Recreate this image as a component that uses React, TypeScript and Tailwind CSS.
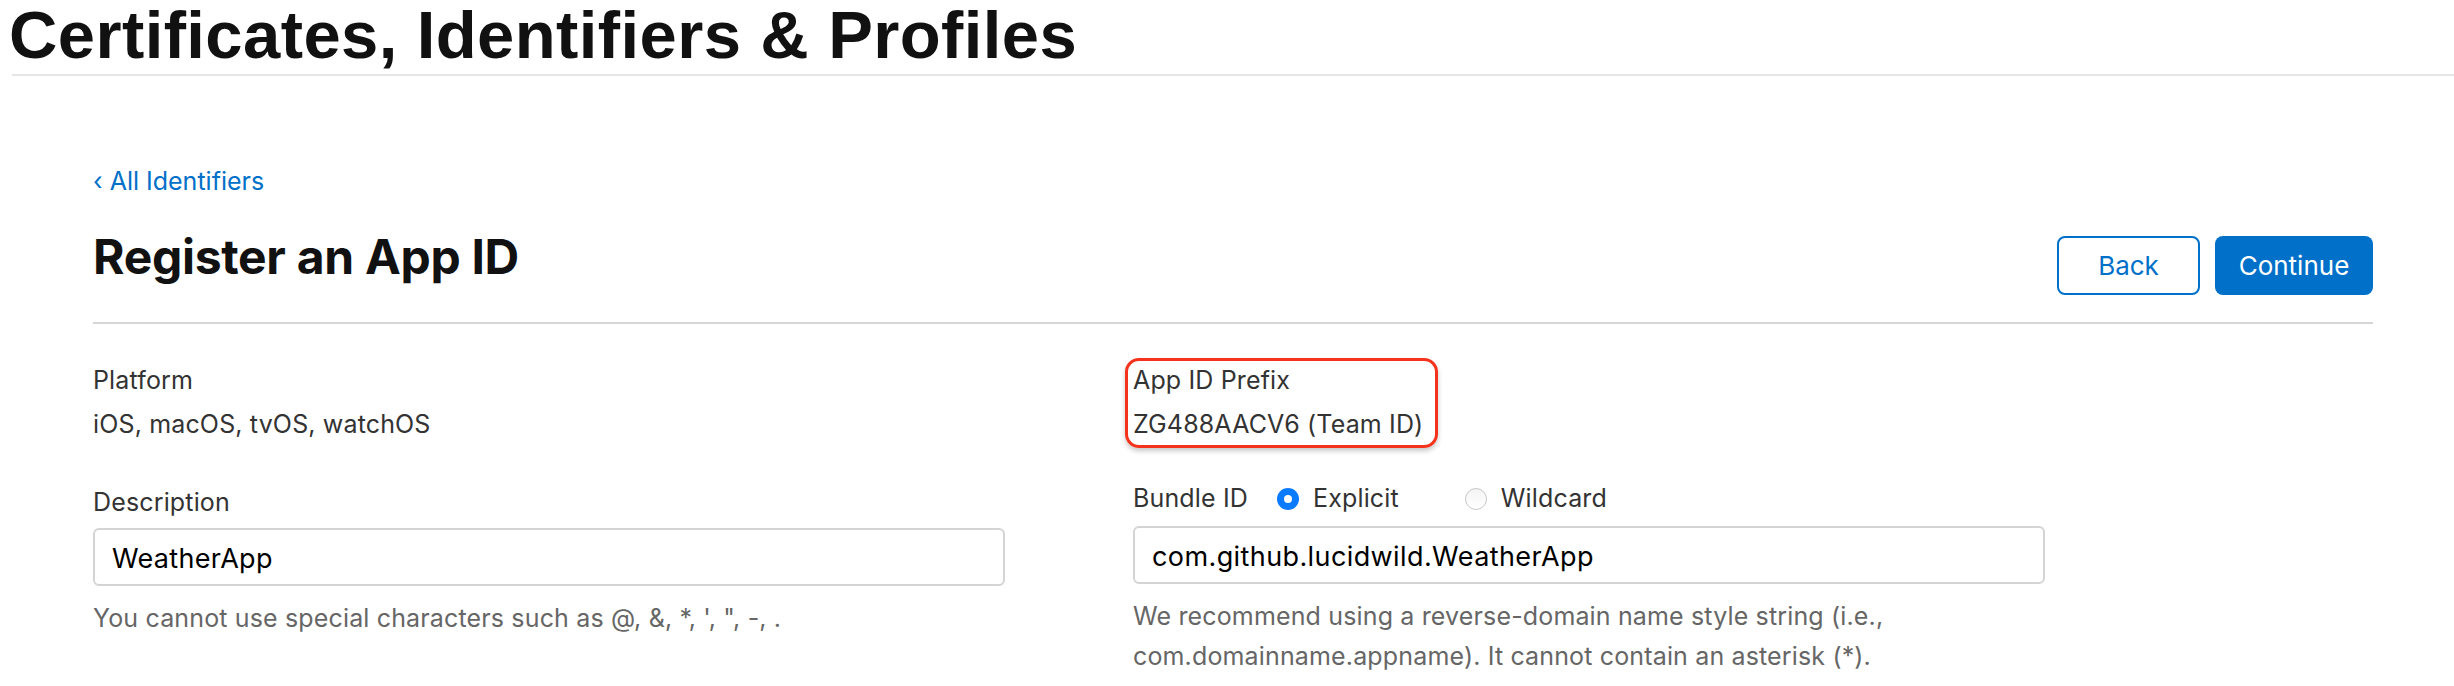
import React from "react";

const body = { fontFamily: "Inter, 'Noto Sans', sans-serif" };

function Radio({ checked }: { checked: boolean }) {
  if (checked) {
    return (
      <span className="inline-flex h-[22px] w-[22px] items-center justify-center rounded-full bg-[#0a7aff]">
        <span className="h-[8px] w-[8px] rounded-full bg-white" />
      </span>
    );
  }
  return (
    <span className="inline-block h-[22px] w-[22px] rounded-full border border-[#c8c8c8] bg-gradient-to-b from-[#f4f4f4] to-white" />
  );
}

export default function App() {
  return (
    <div className="min-h-[686px] w-[2454px] bg-white" style={body}>
      <div className="pt-px">
        <h1
          className="pl-[9px] text-[67px] font-bold leading-[67px] tracking-[0.4px] text-[#111111]"
          style={{ fontFamily: "'Liberation Sans', Arial, sans-serif" }}
        >
          Certificates, Identifiers &amp; Profiles
        </h1>
        <div className="ml-[12px] mt-[6px] h-[2px] bg-[#e6e6e6]" />
      </div>

      <div className="pl-[93px] pr-[81px]">
        <a className="mt-[87px] block text-[25px] leading-[36px] text-[#0070c9]">
          ‹ All Identifiers
        </a>

        <div className="mt-[29px] flex items-start justify-between">
          <h2 className="text-[48px] font-bold leading-[58px] tracking-[-0.3px] text-[#111111]">
            Register an App ID
          </h2>
          <div className="mt-[8px] flex gap-[15px]">
            <button className="flex h-[59px] w-[143px] items-center justify-center rounded-[8px] border-2 border-[#0070c9] bg-white text-[26px] text-[#0070c9]">
              Back
            </button>
            <button className="flex h-[59px] w-[158px] items-center justify-center rounded-[8px] bg-[#0070c9] text-[26px] text-white">
              Continue
            </button>
          </div>
        </div>

        <div className="mt-[27px] h-[2px] bg-[#d6d6d6]" />

        <div className="mt-[34px] flex tracking-[0.15px]">
          <div className="w-[1040px] shrink-0">
            <div className="text-[25px] leading-[44px] text-[#333333]">Platform</div>
            <div className="text-[25px] leading-[44px] text-[#333333]">iOS, macOS, tvOS, watchOS</div>

            <div className="mt-[38px] text-[25px] leading-[36px] text-[#333333]">Description</div>
            <div className="mt-[8px] flex h-[58px] w-[912px] items-center rounded-[6px] border-2 border-[#d4d4d4] pl-[17px] pt-[4px] text-[27px] tracking-[0.3px] text-black">
              WeatherApp
            </div>
            <div className="mt-[12px] text-[25px] leading-[40px] text-[#666666]">
              You cannot use special characters such as @, &amp;, *, ', ", -, .
            </div>
          </div>

          <div className="flex-1">
            <div className="relative w-[300px]">
              <div className="text-[25px] leading-[44px] text-[#333333]">App ID Prefix</div>
              <div className="text-[25px] leading-[44px] text-[#333333]">ZG488AACV6 (Team ID)</div>
              <div className="absolute -left-[8px] top-0 h-[90px] w-[313px] rounded-[14px] border-[3px] border-[#f5331c] shadow-[0_3px_5px_rgba(0,0,0,0.22)]" />
            </div>

            <div className="mt-[35px] flex h-[36px] items-center text-[25px]">
              <span className="text-[#333333]">Bundle ID</span>
              <span className="ml-[29px] flex items-center">
                <Radio checked />
              </span>
              <span className="ml-[14px] text-[#333333]">Explicit</span>
              <span className="ml-[66px] flex items-center">
                <Radio checked={false} />
              </span>
              <span className="ml-[14px] text-[#333333]">Wildcard</span>
            </div>
            <div className="mt-[9px] flex h-[58px] w-[912px] items-center rounded-[6px] border-2 border-[#d4d4d4] pl-[17px] pt-[4px] text-[27px] tracking-[0.4px] text-black">
              com.github.lucidwild.WeatherApp
            </div>
            <div className="mt-[12px] text-[25px] leading-[40px] text-[#666666]">
              We recommend using a reverse-domain name style string (i.e.,
              <br />
              com.domainname.appname). It cannot contain an asterisk (*).
            </div>
          </div>
        </div>
      </div>
    </div>
  );
}
